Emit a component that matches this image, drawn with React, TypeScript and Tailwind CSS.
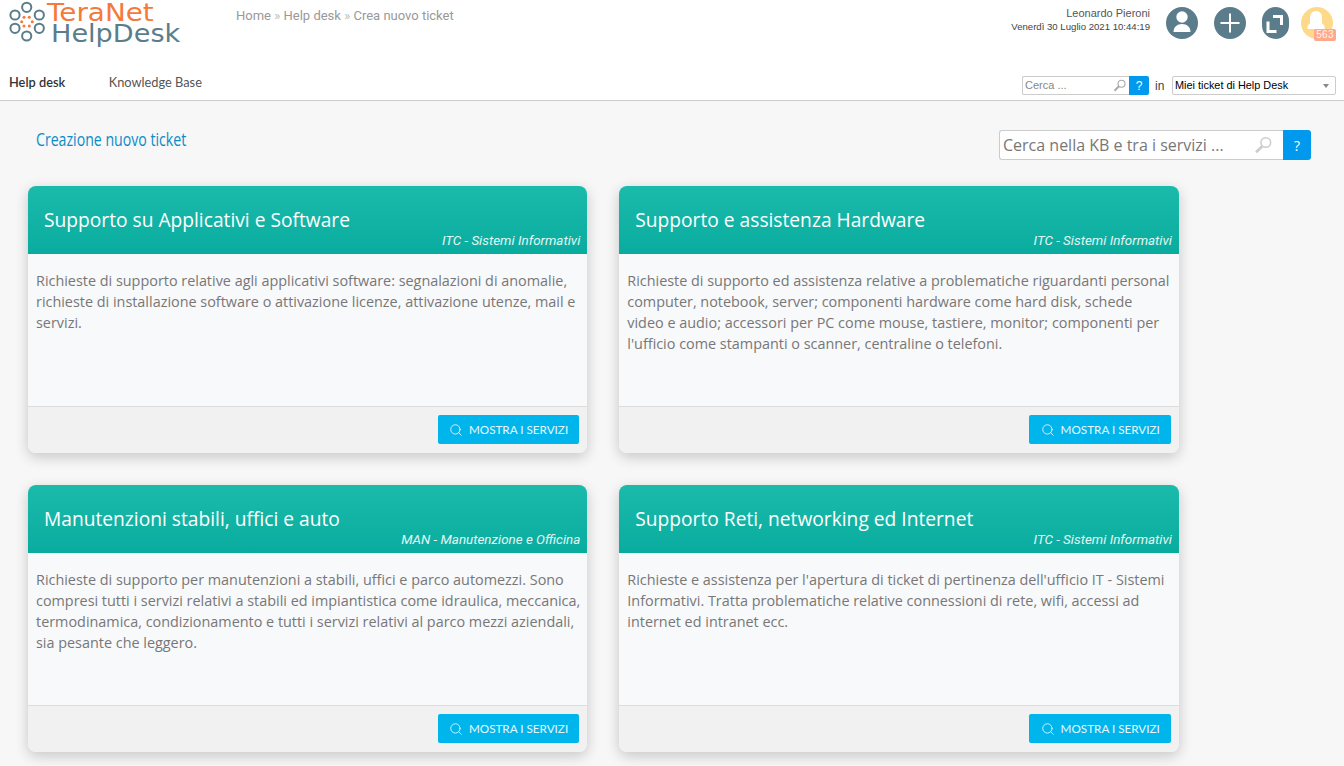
import { Search } from "lucide-react";

const cards = [
  {
    title: "Supporto su Applicativi e Software",
    dept: "ITC - Sistemi Informativi",
    text: "Richieste di supporto relative agli applicativi software: segnalazioni di anomalie, richieste di installazione software o attivazione licenze, attivazione utenze, mail e servizi.",
  },
  {
    title: "Supporto e assistenza Hardware",
    dept: "ITC - Sistemi Informativi",
    text: "Richieste di supporto ed assistenza relative a problematiche riguardanti personal computer, notebook, server; componenti hardware come hard disk, schede\nvideo e audio; accessori per PC come mouse, tastiere, monitor; componenti per l'ufficio come stampanti o scanner, centraline o telefoni.",
  },
  {
    title: "Manutenzioni stabili, uffici e auto",
    dept: "MAN - Manutenzione e Officina",
    text: "Richieste di supporto per manutenzioni a stabili, uffici e parco automezzi. Sono compresi tutti i servizi relativi a stabili ed impiantistica come idraulica, meccanica, termodinamica, condizionamento e tutti i servizi relativi al parco mezzi aziendali, sia pesante che leggero.",
  },
  {
    title: "Supporto Reti, networking ed Internet",
    dept: "ITC - Sistemi Informativi",
    text: "Richieste e assistenza per l'apertura di ticket di pertinenza dell'ufficio IT - Sistemi Informativi. Tratta problematiche relative connessioni di rete, wifi, accessi ad internet ed intranet ecc.",
  },
];

const Logo = () => (
  <div className="flex w-[190px] shrink-0 items-start">
    <svg width="47" height="44" viewBox="0 0 47 44" className="shrink-0" fill="none">
      <g stroke="#5b7d8b" strokeWidth="2">
        <circle cx="26.700" cy="7.300" r="4.600" />
        <circle cx="26.700" cy="36" r="4.600" />
        <circle cx="15" cy="15" r="4.600" />
        <circle cx="39.300" cy="15" r="4.600" />
        <circle cx="15" cy="28.300" r="4.600" />
        <circle cx="39.300" cy="28.300" r="4.600" />
      </g>
      <g fill="#f47a3a">
        <circle cx="24" cy="17.300" r="1.500" />
        <circle cx="29.300" cy="17.300" r="1.500" />
        <circle cx="21.700" cy="21.700" r="1.500" />
        <circle cx="32.300" cy="21.700" r="1.500" />
        <circle cx="24" cy="26" r="1.500" />
        <circle cx="29.300" cy="26" r="1.500" />
      </g>
    </svg>
    <div className="pt-[1px] font-['DejaVu_Sans',sans-serif] text-[24px]">
      <div className="h-[21px] origin-left scale-x-[1.16] leading-[24px] text-[#f47a3a]">TeraNet</div>
      <div className="ml-[4px] h-[24px] origin-left scale-x-[1.13] leading-[24px] text-[#5b7d8b]">HelpDesk</div>
    </div>
  </div>
);

const CircleIcon = ({ children, narrow = false }: { children: React.ReactNode; narrow?: boolean }) => (
  <div className={`flex h-[32px] items-center justify-center rounded-full bg-[#5b7d8b] ${narrow ? "w-[27px]" : "w-[32px]"}`}>
    {children}
  </div>
);

// lens with the handle pointing down-left, used in the search inputs
const LensIcon = ({ size, className }: { size: number; className: string }) => (
  <svg width={size} height={size} viewBox="0 0 13 13" fill="none" stroke="currentColor" className={className}>
    <circle cx="8.500" cy="4.700" r="3.500" strokeWidth="1.100" />
    <path d="M6 7.300L1.500 11.800" strokeWidth="2" />
  </svg>
);

const Card = ({ title, dept, text }: { title: string; dept: string; text: string }) => (
  <div className="flex h-[267px] flex-col rounded-[8px] bg-[#f8f9fb] font-['Open_Sans',sans-serif] shadow-[0_4px_14px_rgba(0,0,0,0.2)]">
    <div className="relative h-[68px] shrink-0 rounded-t-[8px] bg-gradient-to-b from-[#1abbab] to-[#08ac9f] px-[16px] pt-[21px] text-white">
      <h2 className="text-[19.200px] leading-[26px]">{title}</h2>
      <div className="absolute right-[7px] bottom-[5px] font-['Roboto',sans-serif] text-[13.400px] leading-[16px] text-[#e3f7f4] italic">{dept}</div>
    </div>
    <p className="flex-1 whitespace-pre-line pl-[8px] pr-[6px] pt-[16px] text-[14.400px] leading-[21px] text-[#777777]">{text}</p>
    <div className="flex h-[47px] shrink-0 items-start justify-end rounded-b-[8px] border-t border-[#dcdcdc] bg-[#f1f1f1] px-[8px] pt-[8px]">
      <button className="flex h-[29px] w-[141.500px] items-center justify-center gap-[6px] rounded-[2px] bg-[#00b5ec] font-['Lato',sans-serif] text-[11.700px] text-[#e8f8fd]">
        <Search size={14} strokeWidth={1.5} />
        MOSTRA I SERVIZI
      </button>
    </div>
  </div>
);

export default function App() {
  return (
    <div className="min-h-[766px] overflow-hidden bg-[#f7f7f7]">
      <header className="flex h-[101px] flex-col border-b border-[#cccccc] bg-white">
        <div className="flex h-[60px] items-start">
          <Logo />
          <div className="ml-[46px] mt-[7px] font-['Roboto',sans-serif] text-[13px] leading-[17px] text-[#999999]">
            Home <span className="text-[#bbbbbb]">»</span> Help desk <span className="text-[#bbbbbb]">»</span> Crea nuovo ticket
          </div>
          <div className="ml-auto mt-[7px] mr-[11px] flex items-start">
            <div className="mr-[16px] text-right font-['Liberation_Sans',sans-serif] leading-[13px] text-[#555555]">
              <div className="text-[11px]">Leonardo Pieroni</div>
              <div className="text-[9.600px] text-[#444444]">Venerdì 30 Luglio 2021 10:44:19</div>
            </div>
            <CircleIcon>
              <svg width="32" height="32" viewBox="0 0 32 32" fill="white">
                <circle cx="16" cy="10" r="5.700" />
                <path d="M7.500 25c0-5 3.500-8 8.500-8s8.500 3 8.500 8z" />
              </svg>
            </CircleIcon>
            <div className="w-[16px]" />
            <CircleIcon>
              <svg width="20" height="20" viewBox="0 0 20 20" stroke="white" strokeWidth="2">
                <path d="M10 0.500v19M0.500 10h19" />
              </svg>
            </CircleIcon>
            <div className="w-[16px]" />
            <CircleIcon narrow>
              <svg width="27" height="32" viewBox="0 0 27 32" fill="none" stroke="white" strokeWidth="3">
                <path d="M11 9.500h8.500V18M6 14.500V24.500h8.500" />
              </svg>
            </CircleIcon>
            <div className="w-[12px]" />
            <div className="relative h-[32px] w-[32px] rounded-full bg-[#ffd98a]">
              <svg width="32" height="32" viewBox="0 0 32 32" fill="white">
                <path d="M15 4c4 0 6 3 6 7v5l2.500 3v3h-17v-3L9 16v-5c0-4 2-7 6-7z" />
              </svg>
              <span className="absolute right-[-3px] bottom-[-2px] h-[12px] w-[22px] rounded-[2px] bg-[#ffa88a] text-center font-['Liberation_Sans',sans-serif] text-[10px] leading-[12px] tracking-[0.3px] text-[#fff4ee]">
                563
              </span>
            </div>
          </div>
        </div>
        <div className="flex flex-1 items-start px-[9px] pt-[14px]">
          <span className="font-['Lato',sans-serif] text-[12.800px] leading-[16px] font-semibold text-[#333333]">Help desk</span>
          <span className="ml-[43.500px] font-['Lato',sans-serif] text-[12.800px] leading-[16px] text-[#555555]">Knowledge Base</span>
          <div className="ml-auto mr-[-1px] mt-[2px] flex items-center font-['Liberation_Sans',sans-serif]">
            <div className="flex h-[19px] w-[127px]">
              <div className="flex flex-1 items-center rounded-l-[2px] border border-r-0 border-[#cccccc] bg-white">
                <span className="flex-1 pl-[2px] text-[11px] text-[#888888]">Cerca ...</span>
                <LensIcon size={13} className="mr-[3px] text-[#aaaaaa]" />
              </div>
              <span className="flex h-[19px] w-[20px] items-center justify-center rounded-r-[2px] bg-[#0099ee] text-[12px] text-white">?</span>
            </div>
            <span className="mx-[6px] w-[11px] text-[12px] text-[#444444]">in</span>
            <div className="flex h-[19px] w-[164px] items-center justify-between rounded-[2px] border border-[#cccccc] bg-white pl-[2px] pr-[6px] text-[10.900px] text-black">
              Miei ticket di Help Desk
              <span className="h-0 w-0 border-x-[3.500px] border-t-[4px] border-x-transparent border-t-[#888888]" />
            </div>
          </div>
        </div>
      </header>
      <main className="px-[28px]">
        <div className="flex h-[85px] items-start">
          <h1 className="ml-[8px] mt-[26px] origin-left scale-x-[0.785] whitespace-nowrap font-['Open_Sans',sans-serif] text-[18px] leading-[24px] text-[#0a8cc8]">
            Creazione nuovo ticket
          </h1>
          <div className="ml-auto mr-[5px] mt-[29px] flex h-[30px] w-[312px] font-['Open_Sans',sans-serif]">
            <div className="flex flex-1 rounded-l-[3px] border border-r-0 border-[#cccccc] bg-white">
              <span className="flex-1 pl-[3px] text-[16px] leading-[28px] text-[#777777]">Cerca nella KB e tra i servizi ...</span>
              <LensIcon size={18} className="mr-[11px] mt-[5px] text-[#cccccc]" />
            </div>
            <span className="flex w-[28px] items-center justify-center rounded-r-[3px] bg-[#0099ee] text-[14px] text-white">?</span>
          </div>
        </div>
        <div className="grid w-[1151px] grid-cols-[559.300px_559.700px] gap-[32px]">
          {cards.map((c) => (
            <Card key={c.title} {...c} />
          ))}
        </div>
      </main>
    </div>
  );
}
